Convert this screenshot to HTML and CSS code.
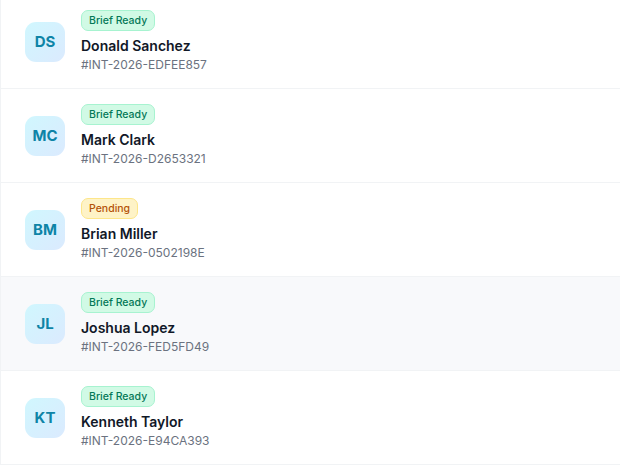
FILE: index.html
```html
<!DOCTYPE html>
<html>
<head>
<meta charset="utf-8">
<link rel="stylesheet" href="styles.css">
</head>
<body>
<div class="list">
  <div class="row">
    <div class="avatar">DS</div>
    <div class="info">
      <span class="badge ready">Brief Ready</span>
      <div class="name">Donald Sanchez</div>
      <div class="id">#INT-2026-EDFEE857</div>
    </div>
  </div>
  <div class="row">
    <div class="avatar">MC</div>
    <div class="info">
      <span class="badge ready">Brief Ready</span>
      <div class="name">Mark Clark</div>
      <div class="id">#INT-2026-D2653321</div>
    </div>
  </div>
  <div class="row">
    <div class="avatar">BM</div>
    <div class="info">
      <span class="badge pending">Pending</span>
      <div class="name">Brian Miller</div>
      <div class="id">#INT-2026-0502198E</div>
    </div>
  </div>
  <div class="row hover">
    <div class="avatar">JL</div>
    <div class="info">
      <span class="badge ready">Brief Ready</span>
      <div class="name">Joshua Lopez</div>
      <div class="id">#INT-2026-FED5FD49</div>
    </div>
  </div>
  <div class="row">
    <div class="avatar">KT</div>
    <div class="info">
      <span class="badge ready">Brief Ready</span>
      <div class="name">Kenneth Taylor</div>
      <div class="id">#INT-2026-E94CA393</div>
    </div>
  </div>
</div>
</body>
</html>
```
FILE: styles.css
```css
html, body {
  margin: 0;
  padding: 0;
  background: #ffffff;
  font-family: Inter, "Liberation Sans", sans-serif;
  overflow: hidden;
}
.list {
  margin-top: -5px;
  border-left: 1px solid #f1f3f5;
  width: 640px;
}
.row {
  display: flex;
  align-items: center;
  gap: 16px;
  padding: 16px 24px;
  height: 61px;
  border-bottom: 1px solid #f1f3f5;
}
.row.hover {
  background: #f8f9fb;
}
.avatar {
  width: 40px;
  height: 40px;
  flex: none;
  border-radius: 11px;
  background: linear-gradient(135deg, #d0f7fe 0%, #dbeafe 100%);
  color: #0e84a6;
  font-weight: 700;
  font-size: 15px;
  display: flex;
  align-items: center;
  justify-content: center;
}
.info {
  display: flex;
  flex-direction: column;
  align-items: flex-start;
}
.badge {
  font-size: 10.5px;
  font-weight: 500;
  line-height: 19px;
  padding: 0 7px;
  border-radius: 7px;
  border: 1px solid;
}
.badge.ready {
  background: #d1fae5;
  border-color: #a7f3d0;
  color: #047857;
}
.badge.pending {
  background: #fef3c7;
  border-color: #fde68a;
  color: #b45309;
}
.name {
  margin-top: 5px;
  font-size: 14px;
  font-weight: 600;
  line-height: 19px;
  color: #111827;
}
.id {
  margin-top: 2px;
  font-size: 12px;
  line-height: 16px;
  color: #6b7280;
}
```
